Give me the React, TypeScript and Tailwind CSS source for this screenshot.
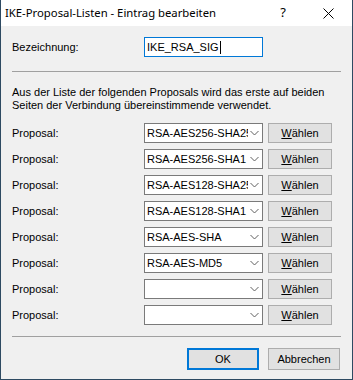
import React from "react";

const proposals = [
  "RSA-AES256-SHA256",
  "RSA-AES256-SHA1",
  "RSA-AES128-SHA256",
  "RSA-AES128-SHA1",
  "RSA-AES-SHA",
  "RSA-AES-MD5",
  "",
  "",
];

const Chevron = () => (
  <svg width="9" height="6" viewBox="0 0 9 6" className="shrink-0">
    <polyline points="0.5,1 4.5,5 8.5,1" fill="none" stroke="#606060" strokeWidth="1" />
  </svg>
);

const ProposalRow = ({ value }: { value: string }) => (
  <div className="flex items-center h-[20px]">
    <span className="w-[132px]">Proposal:</span>
    <div className="flex items-center w-[119px] h-[20px] bg-white border border-[#7a7a7a] pl-[2px] pr-[3px]">
      <span className="w-[101px] overflow-hidden whitespace-nowrap">{value}</span>
      <span className="flex-1 flex justify-end">
        <Chevron />
      </span>
    </div>
    <button className="ml-[5px] w-[64px] h-[20px] bg-[#e1e1e1] border border-[#adadad] flex items-center justify-center">
      <span>
        <span className="underline">W</span>ählen
      </span>
    </button>
  </div>
);

export default function App() {
  return (
    <div
      className="w-[353px] h-[380px] bg-[#f0f0f0] border-l border-r border-b border-[#2e4a62] flex flex-col text-[11px] text-black"
      style={{ fontFamily: '"Liberation Sans", Arial, sans-serif' }}
    >
      {/* Titelleiste */}
      <div className="h-[26px] bg-white flex items-center pl-[4px] shrink-0">
        <span
          className="text-[11.3px] flex-1"
          style={{ fontFamily: '"Segoe UI", "Noto Sans", "Open Sans", sans-serif' }}
        >
          IKE-Proposal-Listen - Eintrag bearbeiten
        </span>
        <span
          className="text-[13px] w-[12px] mr-[34px] text-center"
          style={{ fontFamily: '"Segoe UI", "Noto Sans", sans-serif' }}
        >
          ?
        </span>
        <svg width="11" height="11" viewBox="0 0 11 11" className="mr-[18px]">
          <path d="M0.5 0.5 L10.5 10.5 M10.5 0.5 L0.5 10.5" stroke="#000" strokeWidth="1" />
        </svg>
      </div>

      <div className="flex flex-col px-[11px]">
        <div className="flex items-center h-[20px] mt-[11px]">
          <span className="w-[132px]">Bezeichnung:</span>
          <div className="flex items-center w-[119px] h-[20px] bg-white border border-[#0078d7] pl-[2px]">
            <span>IKE_RSA_SIG</span>
            <span className="w-px h-[13px] bg-black ml-[1px]" />
          </div>
        </div>

        <div className="h-px bg-[#a0a0a0] mt-[14px]" />

        <p className="mt-[14px] leading-[13px]">
          Aus der Liste der folgenden Proposals wird das erste auf beiden
          <br />
          Seiten der Verbindung übereinstimmende verwendet.
        </p>

        <div className="flex flex-col gap-[6px] mt-[11px]">
          {proposals.map((p, i) => (
            <ProposalRow key={i} value={p} />
          ))}
        </div>

        <div className="h-px bg-[#a0a0a0] mt-[11px]" />

        <div className="flex justify-end gap-[9px] mt-[11px] mr-[1px]">
          <button className="w-[72px] h-[22px] bg-[#e1e1e1] border-2 border-[#0078d7]">OK</button>
          <button className="w-[72px] h-[22px] bg-[#e1e1e1] border border-[#adadad]">Abbrechen</button>
        </div>
      </div>
    </div>
  );
}
